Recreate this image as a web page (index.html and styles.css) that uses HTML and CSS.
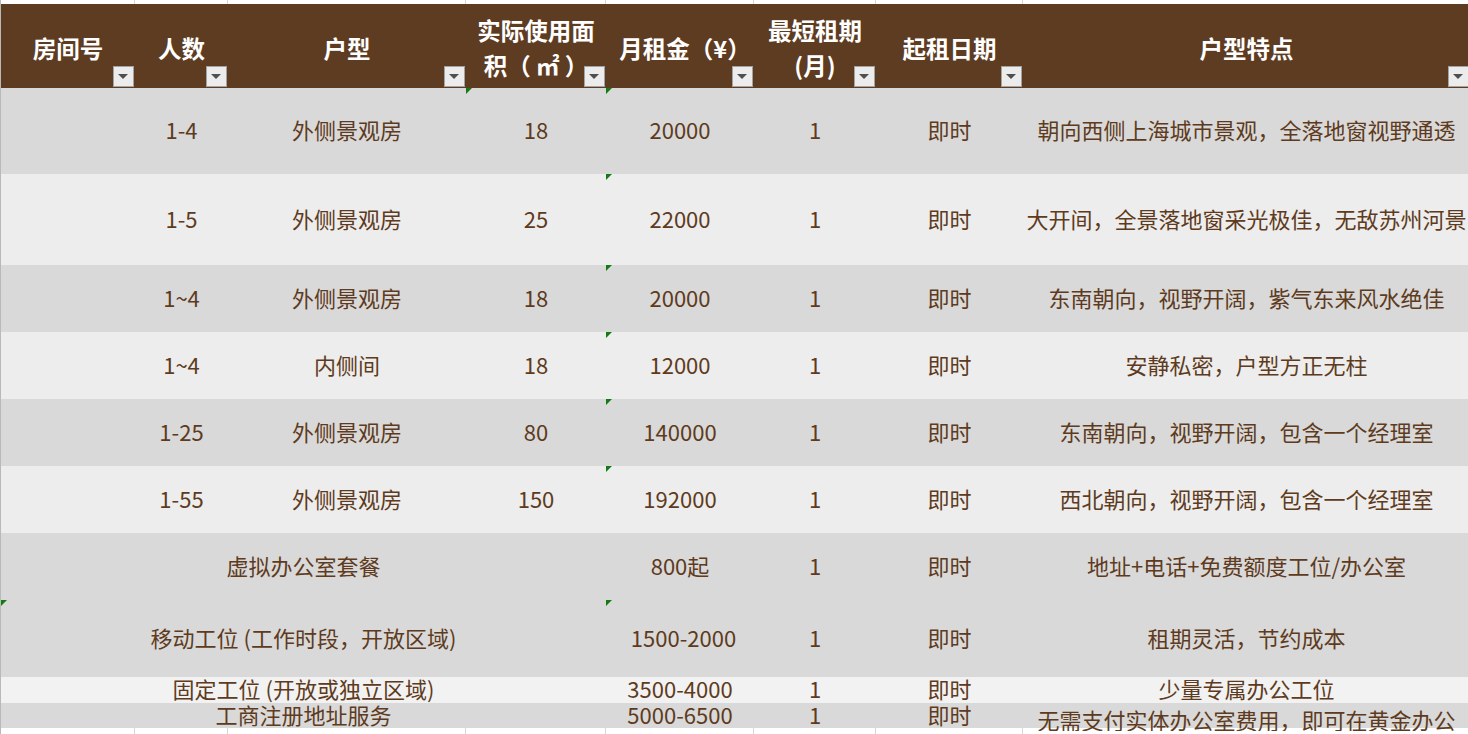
FILE: index.html
```html
<!DOCTYPE html>
<html lang="zh-CN">
<head>
<meta charset="utf-8">
<title>房间列表</title>
<link rel="stylesheet" href="styles.css">
</head>
<body>
<div class="sheet">
  <div class="row grid-strip top-strip">
    <div></div><div></div><div></div><div></div><div></div><div></div><div></div><div></div>
  </div>

  <div class="row head">
    <div class="hc">房间号<span class="flt"></span></div>
    <div class="hc">人数<span class="flt"></span></div>
    <div class="hc">户型<span class="flt"></span></div>
    <div class="hc">实际使用面<br>积（ ㎡ ）<span class="flt"></span><i class="tri tri-head"></i></div>
    <div class="hc hc-rent">月租金（¥）<span class="flt"></span><i class="tri tri-head"></i></div>
    <div class="hc">最短租期<br>(月)<span class="flt"></span></div>
    <div class="hc">起租日期<span class="flt"></span></div>
    <div class="hc">户型特点<span class="flt"></span></div>
  </div>

  <div class="row dark h86">
    <div class="c"></div>
    <div class="c">1-4</div>
    <div class="c">外侧景观房</div>
    <div class="c">18</div>
    <div class="c">20000</div>
    <div class="c">1</div>
    <div class="c">即时</div>
    <div class="c">朝向西侧上海城市景观，全落地窗视野通透</div>
  </div>

  <div class="row light h91">
    <div class="c"></div>
    <div class="c">1-5</div>
    <div class="c">外侧景观房</div>
    <div class="c">25</div>
    <div class="c"><i class="tri"></i>22000</div>
    <div class="c">1</div>
    <div class="c">即时</div>
    <div class="c">大开间，全景落地窗采光极佳，无敌苏州河景</div>
  </div>

  <div class="row dark h67">
    <div class="c"></div>
    <div class="c">1~4</div>
    <div class="c">外侧景观房</div>
    <div class="c">18</div>
    <div class="c"><i class="tri"></i>20000</div>
    <div class="c">1</div>
    <div class="c">即时</div>
    <div class="c">东南朝向，视野开阔，紫气东来风水绝佳</div>
  </div>

  <div class="row light h67">
    <div class="c"></div>
    <div class="c">1~4</div>
    <div class="c">内侧间</div>
    <div class="c">18</div>
    <div class="c"><i class="tri"></i>12000</div>
    <div class="c">1</div>
    <div class="c">即时</div>
    <div class="c">安静私密，户型方正无柱</div>
  </div>

  <div class="row dark h67">
    <div class="c"></div>
    <div class="c">1-25</div>
    <div class="c">外侧景观房</div>
    <div class="c">80</div>
    <div class="c"><i class="tri"></i>140000</div>
    <div class="c">1</div>
    <div class="c">即时</div>
    <div class="c">东南朝向，视野开阔，包含一个经理室</div>
  </div>

  <div class="row light h67">
    <div class="c"></div>
    <div class="c">1-55</div>
    <div class="c">外侧景观房</div>
    <div class="c">150</div>
    <div class="c"><i class="tri"></i>192000</div>
    <div class="c">1</div>
    <div class="c">即时</div>
    <div class="c">西北朝向，视野开阔，包含一个经理室</div>
  </div>

  <div class="row dark h67">
    <div class="c span4">虚拟办公室套餐</div>
    <div class="c">800起</div>
    <div class="c">1</div>
    <div class="c">即时</div>
    <div class="c">地址+电话+免费额度工位/办公室</div>
  </div>

  <div class="row dark h77">
    <div class="c span4"><i class="tri"></i>移动工位 (工作时段，开放区域)</div>
    <div class="c"><i class="tri"></i><span class="nudge">1500-2000</span></div>
    <div class="c">1</div>
    <div class="c">即时</div>
    <div class="c">租期灵活，节约成本</div>
  </div>

  <div class="row pale h26">
    <div class="c span4">固定工位 (开放或独立区域)</div>
    <div class="c">3500-4000</div>
    <div class="c">1</div>
    <div class="c">即时</div>
    <div class="c">少量专属办公工位</div>
  </div>

  <div class="row dark h25">
    <div class="c span4">工商注册地址服务</div>
    <div class="c">5000-6500</div>
    <div class="c">1</div>
    <div class="c">即时</div>
    <div class="c clip">无需支付实体办公室费用，即可在黄金办公</div>
  </div>

  <div class="row grid-strip bottom-strip">
    <div></div><div></div><div></div><div></div><div></div><div></div><div></div><div></div>
  </div>
</div>
</body>
</html>
```

FILE: styles.css
```css
html, body {
  margin: 0;
  padding: 0;
  background: #ffffff;
}

body {
  font-family: "Noto Sans CJK SC", "Noto Sans", sans-serif;
  color: #5e3b20;
  overflow: hidden;
}

.sheet {
  width: 1470px;
  border-left: 1px solid #b9b9b9;
}

.row {
  display: grid;
  grid-template-columns: 134px 93px 238px 140px 148px 122px 147px 447px;
}

.grid-strip div {
  border-right: 1px solid #d6d6d6;
}

.top-strip { height: 4px; }
.bottom-strip { height: 10px; }

.head {
  height: 84px;
  background: #5e3c22;
  color: #ffffff;
  font-weight: 700;
  font-size: 23.5px;
  line-height: 35px;
}

.hc {
  position: relative;
  display: flex;
  align-items: center;
  justify-content: center;
  text-align: center;
  padding-top: 4px;
}

.hc-rent {
  padding-left: 10px;
}

.flt {
  position: absolute;
  right: 1px;
  bottom: 1px;
  width: 19px;
  height: 19px;
  background: #ececec;
  border: 1px solid #a3a3a3;
}

.flt::after {
  content: "";
  position: absolute;
  left: 4px;
  top: 7px;
  border-left: 5px solid transparent;
  border-right: 5px solid transparent;
  border-top: 5px solid #4f4f4f;
}

.dark { background: #d9d9d9; }
.light { background: #ededed; }
.pale { background: #f2f2f2; }

.h86 { height: 86px; }
.h91 { height: 91px; }
.h67 { height: 67px; }
.h77 { height: 77px; }
.h26 { height: 26px; }
.h25 { height: 25px; }

.c {
  position: relative;
  display: flex;
  align-items: center;
  justify-content: center;
  font-size: 22px;
  line-height: 22px;
  padding-bottom: 4px;
  white-space: nowrap;
}

.h25 .c {
  padding-bottom: 6px;
}

.span4 {
  grid-column: span 4;
}

.nudge {
  padding-left: 7px;
}

.h25 .clip {
  align-items: flex-start;
  padding-top: 5px;
  padding-bottom: 0;
  overflow: hidden;
}

.tri {
  position: absolute;
  left: 0;
  top: 0;
  width: 0;
  height: 0;
  border-top: 6px solid #147a14;
  border-right: 6px solid transparent;
}

.tri-head {
  top: auto;
  bottom: -6px;
  z-index: 2;
}
```
